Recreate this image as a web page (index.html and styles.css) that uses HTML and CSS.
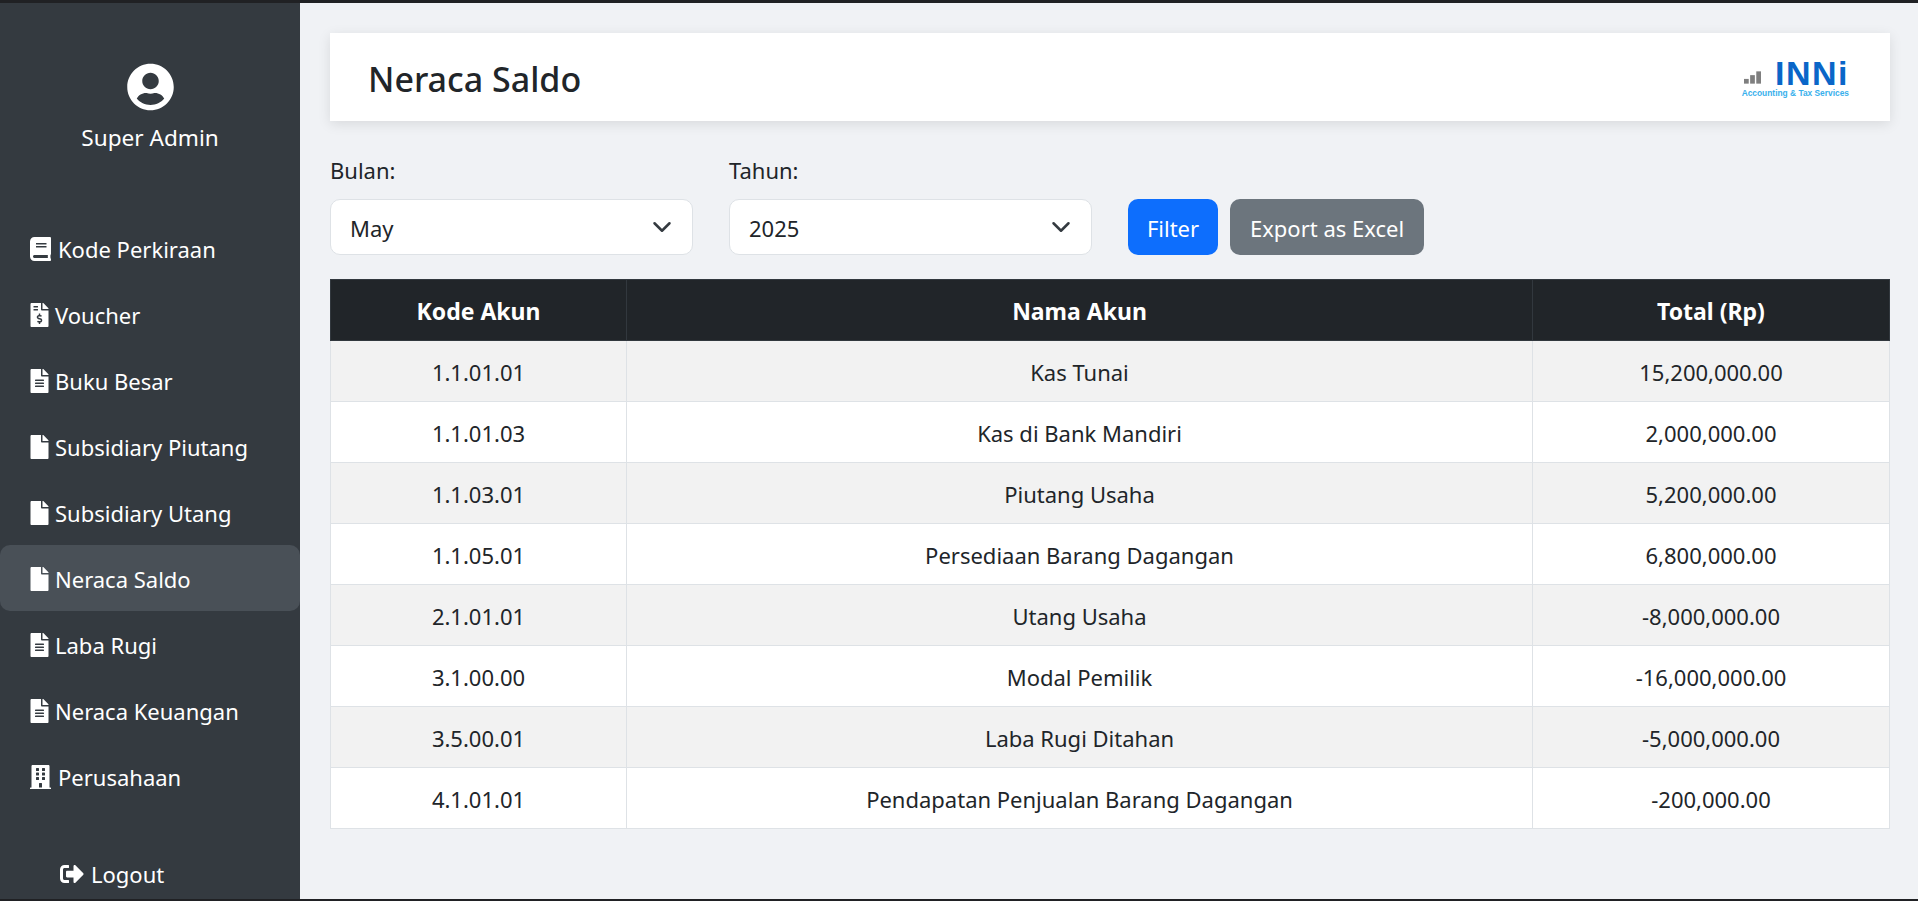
FILE: index.html
```html
<!DOCTYPE html>
<html>
    <head>
        <title>Neraca Saldo</title>
        <link rel="stylesheet" href="styles.css">
    </head>
    <body>
        <div id="app">
            <aside id="sidebar">
                <div id="profile">
                    <svg class="avatar" viewBox="0 0 496 512"><path d="M248 8C111 8 0 119 0 256s111 248 248 248 248-111 248-248S385 8 248 8zm0 96c48.6 0 88 39.4 88 88s-39.4 88-88 88-88-39.4-88-88 39.4-88 88-88zm0 344c-58.7 0-111.3-26.6-146.5-68.2 18.8-35.4 55.6-59.8 98.5-59.8 2.4 0 4.8.4 7.1 1.1 13 4.2 26.6 6.9 40.9 6.9 14.3 0 28-2.7 40.9-6.9 2.3-.7 4.7-1.1 7.1-1.1 42.9 0 79.7 24.4 98.5 59.8C359.3 421.4 306.7 448 248 448z"/></svg>
                    <p>Super Admin</p>
                </div>
                <nav id="menu">
                    <a class="item"><svg class="ico wide" viewBox="0 0 448 512"><path d="M448 360V24c0-13.3-10.7-24-24-24H96C43 0 0 43 0 96v320c0 53 43 96 96 96h328c13.3 0 24-10.7 24-24v-16c0-7.5-3.5-14.3-8.9-18.7-4.2-15.4-4.2-59.3 0-74.7 5.4-4.3 8.9-11.1 8.9-18.6zM128 134c0-3.3 2.7-6 6-6h212c3.3 0 6 2.7 6 6v20c0 3.3-2.7 6-6 6H134c-3.3 0-6-2.7-6-6v-20zm0 64c0-3.3 2.7-6 6-6h212c3.3 0 6 2.7 6 6v20c0 3.3-2.7 6-6 6H134c-3.3 0-6-2.7-6-6v-20zm253.4 250H96c-17.7 0-32-14.3-32-32 0-17.6 14.4-32 32-32h285.4c-1.9 17.1-1.9 46.9 0 64z"/></svg>Kode Perkiraan</a>
                    <a class="item"><svg class="ico" viewBox="0 0 384 512"><path d="M377 105L279.1 7c-4.5-4.5-10.6-7-17-7H256v128h128v-6.1c0-6.3-2.5-12.4-7-16.9zm-153 31V0H24C10.7 0 0 10.7 0 24v464c0 13.3 10.7 24 24 24h336c13.3 0 24-10.7 24-24V160H248c-13.2 0-24-10.8-24-24zM64 72c0-4.42 3.58-8 8-8h80c4.42 0 8 3.58 8 8v16c0 4.42-3.58 8-8 8H72c-4.42 0-8-3.58-8-8V72zm0 80v-16c0-4.42 3.58-8 8-8h80c4.42 0 8 3.58 8 8v16c0 4.42-3.58 8-8 8H72c-4.42 0-8-3.58-8-8zm144 263.88V440c0 4.42-3.58 8-8 8h-16c-4.42 0-8-3.58-8-8v-24.29c-11.29-.58-22.27-4.52-31.37-11.35-3.9-2.93-4.1-8.77-.57-12.14l11.75-11.21c2.77-2.64 6.89-2.76 10.13-.73 3.87 2.42 8.26 3.72 12.82 3.72h28.11c6.5 0 11.8-5.92 11.8-13.19 0-5.95-3.61-11.19-8.77-12.73l-45-13.5c-18.59-5.58-31.58-23.42-31.58-43.39 0-24.52 19.05-44.44 42.67-45.07V232c0-4.42 3.58-8 8-8h16c4.42 0 8 3.58 8 8v24.29c11.29.58 22.27 4.51 31.37 11.35 3.9 2.93 4.1 8.77.57 12.14l-11.75 11.21c-2.77 2.64-6.89 2.76-10.13.73-3.87-2.43-8.26-3.72-12.82-3.72h-28.11c-6.5 0-11.8 5.92-11.8 13.19 0 5.95 3.61 11.19 8.77 12.73l45 13.5c18.59 5.58 31.58 23.42 31.58 43.39 0 24.53-19.05 44.44-42.67 45.07z"/></svg>Voucher</a>
                    <a class="item"><svg class="ico" viewBox="0 0 384 512"><path d="M224 136V0H24C10.7 0 0 10.7 0 24v464c0 13.3 10.7 24 24 24h336c13.3 0 24-10.7 24-24V160H248c-13.2 0-24-10.8-24-24zm64 236c0 6.6-5.4 12-12 12H108c-6.6 0-12-5.4-12-12v-8c0-6.6 5.4-12 12-12h168c6.6 0 12 5.4 12 12v8zm0-64c0 6.6-5.4 12-12 12H108c-6.6 0-12-5.4-12-12v-8c0-6.6 5.4-12 12-12h168c6.6 0 12 5.4 12 12v8zm0-72v8c0 6.6-5.4 12-12 12H108c-6.6 0-12-5.4-12-12v-8c0-6.6 5.4-12 12-12h168c6.6 0 12 5.4 12 12zm96-114.1v6.1H256V0h6.1c6.4 0 12.5 2.5 17 7l97.9 98c4.5 4.5 7 10.6 7 16.9z"/></svg>Buku Besar</a>
                    <a class="item"><svg class="ico" viewBox="0 0 384 512"><path d="M224 136V0H24C10.7 0 0 10.7 0 24v464c0 13.3 10.7 24 24 24h336c13.3 0 24-10.7 24-24V160H248c-13.2 0-24-10.8-24-24zm160-14.1v6.1H256V0h6.1c6.4 0 12.5 2.5 17 7l97.9 98c4.5 4.5 7 10.6 7 16.9z"/></svg>Subsidiary Piutang</a>
                    <a class="item"><svg class="ico" viewBox="0 0 384 512"><path d="M224 136V0H24C10.7 0 0 10.7 0 24v464c0 13.3 10.7 24 24 24h336c13.3 0 24-10.7 24-24V160H248c-13.2 0-24-10.8-24-24zm160-14.1v6.1H256V0h6.1c6.4 0 12.5 2.5 17 7l97.9 98c4.5 4.5 7 10.6 7 16.9z"/></svg>Subsidiary Utang</a>
                    <a class="item active"><svg class="ico" viewBox="0 0 384 512"><path d="M224 136V0H24C10.7 0 0 10.7 0 24v464c0 13.3 10.7 24 24 24h336c13.3 0 24-10.7 24-24V160H248c-13.2 0-24-10.8-24-24zm160-14.1v6.1H256V0h6.1c6.4 0 12.5 2.5 17 7l97.9 98c4.5 4.5 7 10.6 7 16.9z"/></svg>Neraca Saldo</a>
                    <a class="item"><svg class="ico" viewBox="0 0 384 512"><path d="M224 136V0H24C10.7 0 0 10.7 0 24v464c0 13.3 10.7 24 24 24h336c13.3 0 24-10.7 24-24V160H248c-13.2 0-24-10.8-24-24zm64 236c0 6.6-5.4 12-12 12H108c-6.6 0-12-5.4-12-12v-8c0-6.6 5.4-12 12-12h168c6.6 0 12 5.4 12 12v8zm0-64c0 6.6-5.4 12-12 12H108c-6.6 0-12-5.4-12-12v-8c0-6.6 5.4-12 12-12h168c6.6 0 12 5.4 12 12v8zm0-72v8c0 6.6-5.4 12-12 12H108c-6.6 0-12-5.4-12-12v-8c0-6.6 5.4-12 12-12h168c6.6 0 12 5.4 12 12zm96-114.1v6.1H256V0h6.1c6.4 0 12.5 2.5 17 7l97.9 98c4.5 4.5 7 10.6 7 16.9z"/></svg>Laba Rugi</a>
                    <a class="item"><svg class="ico" viewBox="0 0 384 512"><path d="M224 136V0H24C10.7 0 0 10.7 0 24v464c0 13.3 10.7 24 24 24h336c13.3 0 24-10.7 24-24V160H248c-13.2 0-24-10.8-24-24zm64 236c0 6.6-5.4 12-12 12H108c-6.6 0-12-5.4-12-12v-8c0-6.6 5.4-12 12-12h168c6.6 0 12 5.4 12 12v8zm0-64c0 6.6-5.4 12-12 12H108c-6.6 0-12-5.4-12-12v-8c0-6.6 5.4-12 12-12h168c6.6 0 12 5.4 12 12v8zm0-72v8c0 6.6-5.4 12-12 12H108c-6.6 0-12-5.4-12-12v-8c0-6.6 5.4-12 12-12h168c6.6 0 12 5.4 12 12zm96-114.1v6.1H256V0h6.1c6.4 0 12.5 2.5 17 7l97.9 98c4.5 4.5 7 10.6 7 16.9z"/></svg>Neraca Keuangan</a>
                    <a class="item"><svg class="ico wide" viewBox="0 0 448 512"><path d="M436 480h-20V24c0-13.3-10.7-24-24-24H56C42.7 0 32 10.7 32 24v456H12c-6.6 0-12 5.4-12 12v20h448v-20c0-6.6-5.4-12-12-12zM128 76c0-6.6 5.4-12 12-12h40c6.6 0 12 5.4 12 12v40c0 6.6-5.4 12-12 12h-40c-6.6 0-12-5.4-12-12V76zm0 96c0-6.6 5.4-12 12-12h40c6.6 0 12 5.4 12 12v40c0 6.6-5.4 12-12 12h-40c-6.6 0-12-5.4-12-12v-40zm52 148h-40c-6.6 0-12-5.4-12-12v-40c0-6.6 5.4-12 12-12h40c6.6 0 12 5.4 12 12v40c0 6.6-5.4 12-12 12zm76 160h-64v-84c0-6.6 5.4-12 12-12h40c6.6 0 12 5.4 12 12v84zm64-172c0 6.6-5.4 12-12 12h-40c-6.6 0-12-5.4-12-12v-40c0-6.6 5.4-12 12-12h40c6.6 0 12 5.4 12 12v40zm0-96c0 6.6-5.4 12-12 12h-40c-6.6 0-12-5.4-12-12v-40c0-6.6 5.4-12 12-12h40c6.6 0 12 5.4 12 12v40zm0-96c0 6.6-5.4 12-12 12h-40c-6.6 0-12-5.4-12-12V76c0-6.6 5.4-12 12-12h40c6.6 0 12 5.4 12 12v40z"/></svg>Perusahaan</a>
                </nav>
                <a id="logout"><svg class="ico logout-ico" viewBox="0 0 512 512"><path d="M497 273L329 441c-15 15-41 4.5-41-17v-96H152c-13.3 0-24-10.7-24-24v-96c0-13.3 10.7-24 24-24h136V88c0-21.4 25.9-32 41-17l168 168c9.3 9.4 9.3 24.6 0 34zM192 436v-40c0-6.6-5.4-12-12-12H96c-17.7 0-32-14.3-32-32V160c0-17.7 14.3-32 32-32h84c6.6 0 12-5.4 12-12V76c0-6.6-5.4-12-12-12H96c-53 0-96 43-96 96v192c0 53 43 96 96 96h84c6.6 0 12-5.4 12-12z"/></svg>Logout</a>
            </aside>
            <main id="content">
                <header id="title-card">
                    <h1>Neraca Saldo</h1>
                    <div id="logo">
                        <div id="logo-top">
                            <svg class="bars" viewBox="0 0 18 13"><rect x="0" y="8" width="5" height="5"/><rect x="6.5" y="4" width="5" height="9"/><rect x="13" y="0" width="5" height="13"/></svg>
                            <span id="logo-name">INNi</span>
                        </div>
                        <span id="logo-sub">Accounting &amp; Tax Services</span>
                    </div>
                </header>
                <form id="filters">
                    <div class="field">
                        <label>Bulan:</label>
                        <div class="select">May<svg class="chev" viewBox="0 0 16 16"><path d="M2 5l6 6 6-6"/></svg></div>
                    </div>
                    <div class="field">
                        <label>Tahun:</label>
                        <div class="select">2025<svg class="chev" viewBox="0 0 16 16"><path d="M2 5l6 6 6-6"/></svg></div>
                    </div>
                    <button type="button" class="btn blue">Filter</button>
                    <button type="button" class="btn gray">Export as Excel</button>
                </form>
                <table id="saldo">
                    <thead>
                        <tr><th class="c1">Kode Akun</th><th class="c2">Nama Akun</th><th class="c3">Total (Rp)</th></tr>
                    </thead>
                    <tbody>
                        <tr><td>1.1.01.01</td><td>Kas Tunai</td><td>15,200,000.00</td></tr>
                        <tr><td>1.1.01.03</td><td>Kas di Bank Mandiri</td><td>2,000,000.00</td></tr>
                        <tr><td>1.1.03.01</td><td>Piutang Usaha</td><td>5,200,000.00</td></tr>
                        <tr><td>1.1.05.01</td><td>Persediaan Barang Dagangan</td><td>6,800,000.00</td></tr>
                        <tr><td>2.1.01.01</td><td>Utang Usaha</td><td>-8,000,000.00</td></tr>
                        <tr><td>3.1.00.00</td><td>Modal Pemilik</td><td>-16,000,000.00</td></tr>
                        <tr><td>3.5.00.01</td><td>Laba Rugi Ditahan</td><td>-5,000,000.00</td></tr>
                        <tr><td>4.1.01.01</td><td>Pendapatan Penjualan Barang Dagangan</td><td>-200,000.00</td></tr>
                    </tbody>
                </table>
            </main>
        </div>
    </body>
</html>
```

FILE: styles.css
```css
*{
    box-sizing: border-box;
}
html{
    background-color: #202124;
}
body{
    margin: 0;
    height: 901px;
    padding: 3px 0 2px;
    overflow: hidden;
    font-family: "Noto Sans", sans-serif;
    font-size: 22px;
    line-height: 30px;
    color: #212529;
}
#app{
    display: flex;
    height: 100%;
    background-color: #f0f2f5;
}
#sidebar{
    flex: none;
    width: 300px;
    display: flex;
    flex-direction: column;
    background-color: #343a40;
    color: white;
}
#profile{
    display: flex;
    flex-direction: column;
    align-items: center;
    padding-top: 60px;
}
#profile p{
    margin: 12px 0 1px;
    font-size: 22.6px;
}
.avatar{
    width: 47px;
    height: 48px;
    fill: white;
}
#menu{
    display: flex;
    flex-direction: column;
    margin-top: 61px;
}
.item{
    display: flex;
    align-items: center;
    height: 66px;
    padding: 2px 0 0 30px;
    border-radius: 10px 0 0 10px;
}
.item.active{
    background-color: #495057;
    border-radius: 10px;
}
.ico{
    flex: none;
    width: 19px;
    height: 24px;
    margin-right: 6px;
    fill: white;
}
.ico.wide{
    width: 21px;
    margin-right: 7px;
}
#logout{
    display: flex;
    align-items: center;
    margin-top: 48px;
    padding: 2px 0 0 60px;
}
.ico.logout-ico{
    width: 24px;
    margin-right: 7px;
}
#content{
    flex: 1;
    padding: 30px 28px 0 30px;
}
#title-card{
    display: flex;
    justify-content: space-between;
    align-items: center;
    height: 88px;
    padding: 4px 41px 0 38px;
    background-color: white;
    box-shadow: 0 3px 12px rgba(0,0,0,0.1);
}
h1{
    margin: 0;
    font-size: 34px;
    font-weight: 500;
    line-height: 42px;
}
#logo{
    display: flex;
    flex-direction: column;
    align-items: flex-end;
    gap: 1px;
}
#logo-top{
    display: flex;
    align-items: flex-end;
    gap: 14px;
}
.bars{
    width: 17px;
    height: 13px;
    margin-bottom: 3px;
    fill: #7f7f7f;
}
#logo-name{
    font-family: "Liberation Sans", sans-serif;
    font-weight: bold;
    font-size: 34px;
    line-height: 27px;
    letter-spacing: 1.5px;
    color: #0a66c8;
}
#logo-sub{
    font-family: "Liberation Sans", sans-serif;
    font-size: 8.4px;
    font-weight: bold;
    line-height: 11px;
    color: #38b0ec;
}
#filters{
    display: flex;
    align-items: flex-end;
    gap: 12px;
    margin-top: 32px;
}
.field{
    display: flex;
    flex-direction: column;
    width: 363px;
    margin-right: 24px;
}
label{
    line-height: 34px;
    margin-bottom: 12px;
}
.select{
    display: flex;
    justify-content: space-between;
    align-items: center;
    height: 56px;
    padding: 2px 20px 0 19px;
    background-color: white;
    border: 1px solid #dee2e6;
    border-radius: 10px;
}
.chev{
    width: 20px;
    height: 20px;
    margin-top: -2px;
    fill: none;
    stroke: #343a40;
    stroke-width: 2;
    stroke-linecap: round;
    stroke-linejoin: round;
}
.btn{
    height: 56px;
    padding: 2px 0 0;
    border: none;
    border-radius: 10px;
    font: inherit;
    color: white;
}
.btn.blue{
    width: 90px;
    background-color: #0d6efd;
}
.btn.gray{
    width: 194px;
    background-color: #6c757d;
}
#saldo{
    width: 1560px;
    margin-top: 24px;
    border-collapse: collapse;
    table-layout: fixed;
    text-align: center;
}
#saldo th{
    height: 61px;
    padding: 2px 0 0;
    background-color: #212529;
    color: white;
    font-size: 23px;
    font-weight: 700;
    border: 1px solid #32383e;
}
#saldo td{
    height: 61px;
    padding: 2px 0 0;
    background-color: white;
    border: 1px solid #dee2e6;
}
#saldo tbody tr:nth-child(odd) td{
    background-color: #f2f2f2;
}
.c1{
    width: 296px;
}
.c3{
    width: 357px;
}
```
